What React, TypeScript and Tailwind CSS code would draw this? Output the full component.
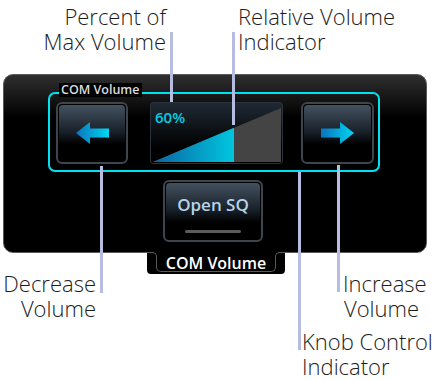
const callout = 'absolute w-[3px] bg-[#b6bde0] z-10';
const label = "absolute flex flex-col text-[22px] leading-[25px] font-light text-[#1c1c1c] font-['Open_Sans',sans-serif]";

function Arrow({ dir }: { dir: 'left' | 'right' }) {
  const id = `arrow-${dir}`;
  return (
    <svg width="33" height="22" viewBox="0 0 33 22">
      <defs>
        <linearGradient id={id} x1="0" x2="1" y1="0" y2="0">
          <stop offset="0" stopColor="#0a74bd" />
          <stop offset="1" stopColor="#00d6f2" />
        </linearGradient>
      </defs>
      {dir === 'right' ? (
        <path d="M0 6.5 H19 V0 L33 11 L19 22 V15.5 H0 Z" fill={`url(#${id})`} />
      ) : (
        <path d="M33 6.5 H14 V0 L0 11 L14 22 V15.5 H33 Z" fill={`url(#${id})`} />
      )}
    </svg>
  );
}

function KeyButton({ className, children }: { className: string; children: React.ReactNode }) {
  return (
    <div className={`${className} rounded-[6px] border-2 border-[#3f454c] bg-black p-px`}>
      <div className="relative h-full w-full rounded-[4px] bg-[linear-gradient(to_bottom,#43525f,#18202a_48%,#000_70%)] flex flex-col items-center justify-center">
        {children}
      </div>
    </div>
  );
}

function VolumeBar() {
  return (
    <div className="relative w-[133px] h-[62px] rounded-[3px] border border-[#2a323c] bg-[linear-gradient(to_bottom,#1f2934,#000_75%)]">
      <span className="absolute left-[4px] top-[5px] text-[15px] leading-[18px] font-semibold text-[#00cfe2]">
        60%
      </span>
      <svg className="absolute left-0 top-0" width="131" height="60" viewBox="0 0 131 60">
        <defs>
          <linearGradient id="vol" x1="0" x2="1" y1="0" y2="0">
            <stop offset="0" stopColor="#0b64a3" />
            <stop offset="1" stopColor="#00c6de" />
          </linearGradient>
        </defs>
        <polygon points="2,59 130,5 130,59" fill="#444444" />
        <polygon points="2,59 83,24.8 83,59" fill="url(#vol)" />
      </svg>
    </div>
  );
}

export default function App() {
  return (
    <div className="relative w-[442px] h-[380px] bg-white overflow-hidden font-['Open_Sans',sans-serif]">
      {/* callout labels */}
      <div className={`${label} right-[276px] top-[4px] items-end`}>
        <span>Percent of</span>
        <span>Max Volume</span>
      </div>
      <div className={`${label} left-[238px] top-[4px]`}>
        <span>Relative Volume</span>
        <span>Indicator</span>
      </div>
      <div className={`${label} right-[346px] top-[271px] items-end`}>
        <span>Decrease</span>
        <span>Volume</span>
      </div>
      <div className={`${label} left-[343px] top-[271px]`}>
        <span>Increase</span>
        <span className="pl-px">Volume</span>
      </div>
      <div className={`${label} left-[302px] top-[329px]`}>
        <span>Knob Control</span>
        <span>Indicator</span>
      </div>

      {/* callout lines */}
      <div className={`${callout} left-[170px] top-[32px] h-[70px]`} />
      <div className={`${callout} left-[232px] top-[32px] h-[93px]`} />
      <div className={`${callout} left-[100px] top-[166px] h-[127px]`} />
      <div className={`${callout} left-[298px] top-[172px] h-[178px]`} />
      <div className={`${callout} left-[337px] top-[165px] h-[127px]`} />

      <div className="pt-[74px] pl-[3px]">
        <div className="w-[424px] flex flex-col items-center">
          <div className="w-full h-[179px] rounded-[10px] border border-[#5a5a5a] bg-[linear-gradient(to_bottom,#2f2f2f,#000_24%)] pt-[17px] pl-[44px] flex flex-col gap-[8px]">
            <div className="relative w-[332px] h-[80px] rounded-[7px] border-2 border-[#00e2f2] pt-[8px] pl-[6px] flex items-start gap-[22px]">
              <span className="absolute left-[9px] top-[-11px] px-[2px] bg-black text-[12.5px] leading-[14px] font-semibold text-[#dcdcdc]">
                COM Volume
              </span>
              <KeyButton className="w-[72px] h-[62px]">
                <Arrow dir="left" />
              </KeyButton>
              <div className="flex gap-[18px]">
                <VolumeBar />
                <KeyButton className="w-[73px] h-[62px]">
                  <Arrow dir="right" />
                </KeyButton>
              </div>
            </div>
            <div className="w-[332px] flex justify-center pr-[2px]">
              <KeyButton className="w-[100px] h-[62px]">
                <span className="text-[17px] leading-[20px] font-semibold text-[#b7d3ea] -mt-[13px]">Open SQ</span>
                <div className="absolute bottom-[6px] w-[56px] h-[3px] rounded-full bg-[#5c5c5c]" />
              </KeyButton>
            </div>
          </div>

          {/* page tab */}
          <div className="relative -mt-px ml-[2px] w-[138px] h-[22px] rounded-b-[4px] bg-black">
            <div className="absolute left-0 top-0 w-[10px] h-[6px] border-t border-r border-[#5a5a5a] rounded-tr-[5px]" />
            <div className="absolute right-0 top-0 w-[10px] h-[6px] border-t border-l border-[#5a5a5a] rounded-tl-[5px]" />
            <div className="absolute left-[9px] right-[9px] top-[5px] bottom-[2px] border-l border-r border-b border-[#5a5a5a] rounded-b-[5px] flex justify-center">
              <span className="text-[16px] leading-[16px] font-semibold text-white -mt-[2px]">COM Volume</span>
            </div>
          </div>
        </div>
      </div>
    </div>
  );
}
